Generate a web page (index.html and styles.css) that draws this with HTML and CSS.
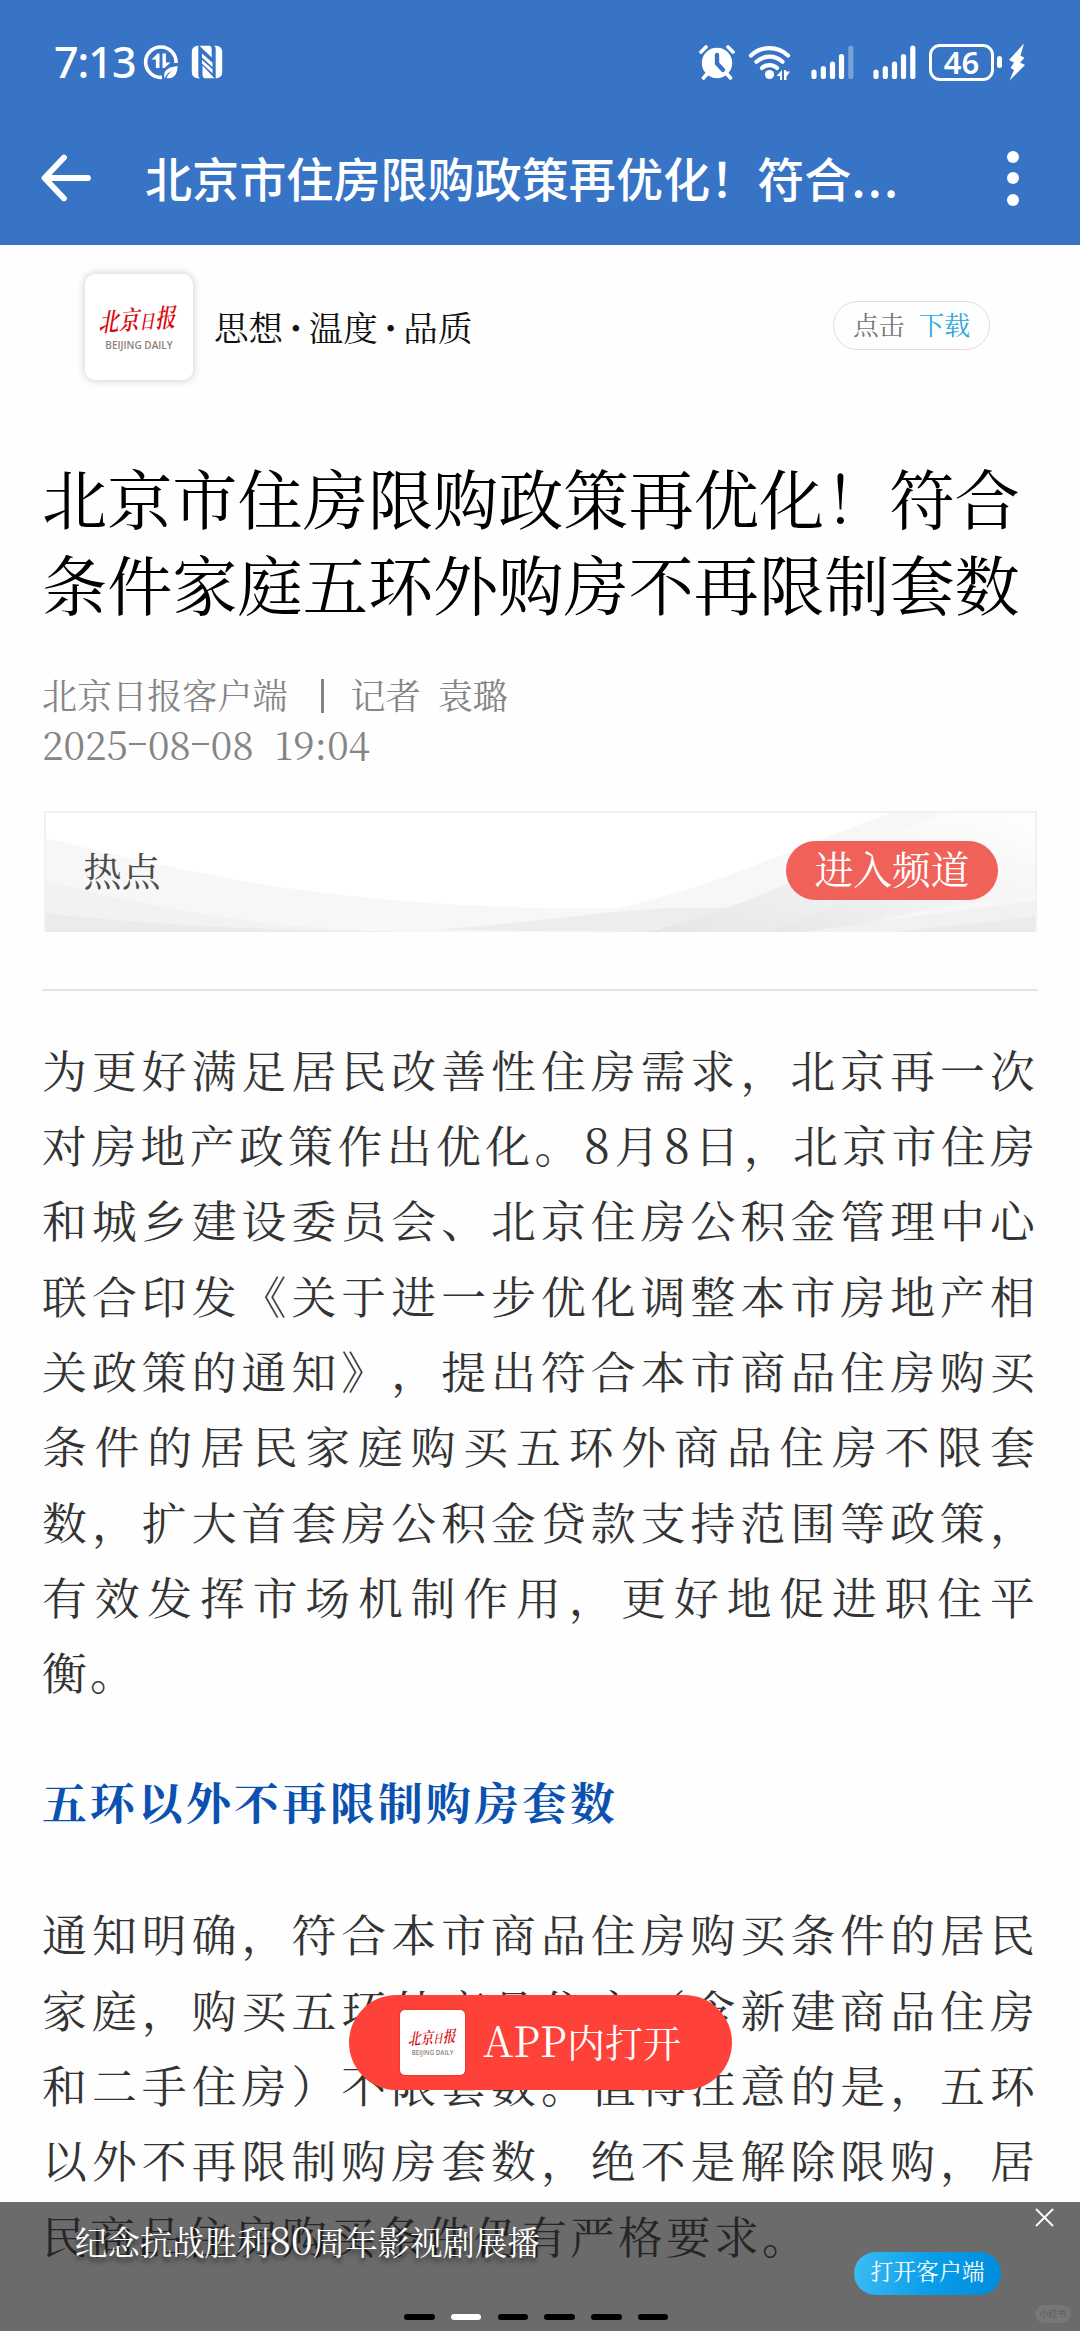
FILE: index.html
```html
<!DOCTYPE html>
<html lang="zh-CN">
<head>
<meta charset="utf-8">
<title>北京市住房限购政策再优化！</title>
<link rel="stylesheet" href="styles.css">
</head>
<body>
<div class="screen">
  <header class="top">
    <div class="status">
      <span class="time">7:13</span>
      <svg class="ic-data" width="36" height="36" viewBox="0 0 36 36">
        <path d="M19 33.3A15.2 15.2 0 1 1 33 19" fill="none" stroke="#fff" stroke-width="3.6"/>
        <path d="M8.5 15.5 14.5 9.5h2V24h-3.6V15.500zM19.500 9.500h3.400v9h4.600L21.500 24h-2z" fill="#fff"/>
        <path d="M21.500 34.500c-1.500-7 1.500-11 13-12.500 0 8.500-4 13.500-11 12 1.500-3.500 3.500-6 6.500-7.500-4 1.200-6.500 3.800-8.500 8z" fill="#fff"/>
      </svg>
      <svg class="ic-nfc" width="32" height="34" viewBox="0 0 32 34">
        <path d="M6.500.7h.8V31.500l1.600 1.700H6.500A5.700 5.700 0 0 1 .8 27.500v-21A5.800 5.800 0 0 1 6.500.7z" fill="#fff"/>
        <path d="M25.500 33.300h-.8V2.500L23.100.7h2.400a5.700 5.700 0 0 1 5.700 5.800v21a5.700 5.700 0 0 1-5.700 5.800z" fill="#fff"/>
        <path d="M8.500.7h10.500c1.300 1 1.700 2.200 1.700 4V12.500zM23.500 33.300H13.500c-1.500-1-2-2.200-2-4V20.500z" fill="#fff"/>
        <path d="M11 8.500 21.500 17.800V22L11 12.500zM11 15 21.500 24.300v4L11 18.500z" fill="#fff"/>
      </svg>
      <span class="push"></span>
      <svg class="ic-alarm" width="36" height="36" viewBox="0 0 36 36">
        <path d="M2 8 7 3M34 8 29 3M8 30l-3.500 4M28 30l3.500 4" stroke="#fff" stroke-width="3.600" stroke-linecap="round"/>
        <circle cx="18" cy="19" r="15.200" fill="#fff"/>
        <path d="M18 11V19.500l6 6.500" fill="none" stroke="#3874c6" stroke-width="4.400" stroke-linecap="round"/>
      </svg>
      <svg class="ic-wifi" width="44" height="36" viewBox="0 0 44 36">
        <g fill="none" stroke="#fff" stroke-width="4.200" stroke-linecap="round"><path d="M3 11.500a27 27 0 0 1 37 0M8.500 17.800a19 19 0 0 1 26 0M14 24a11 11 0 0 1 15 0"/></g>
        <circle cx="21.500" cy="30.500" r="4.600" fill="#fff"/>
        <path d="M34 26v10h-2v-4h-3.500zM36 36V26h2v1.500h4L38.500 32.500V36z" fill="#fff"/>
      </svg>
      <svg class="ic-sig" width="44" height="36" viewBox="0 0 44 36" stroke="#fff" stroke-width="5.200" stroke-linecap="round">
        <path d="M3 28v4.500M12.300 24.500v8M21.500 20v12.500M30.500 12.500v20"/><path d="M39.800 4v28.500" opacity=".32"/>
      </svg>
      <svg class="ic-sig2" width="44" height="36" viewBox="0 0 44 36" stroke="#fff" stroke-width="5.200" stroke-linecap="round">
        <path d="M3 28v4.500M12.300 24.500v8M21.500 20v12.500M30.500 12.500v20M39.800 4v28.500"/>
      </svg>
      <span class="battery">46</span><span class="cap"></span>
      <svg class="ic-bolt" width="18" height="38" viewBox="0 0 18 38"><path d="M16 .5 1 17l5 2.500L2.500 25l3.500 2-4.500 10.500L17 22l-5-2.500L16.500 15l-4-2.500z" fill="#fff"/></svg>
    </div>
    <div class="nav">
      <svg width="51" height="48" viewBox="0 0 51 48" fill="none" stroke="#fff" stroke-width="5.800" stroke-linecap="round" stroke-linejoin="round"><path d="M23 3.500 3.500 24 23 44.500M4 24h43"/></svg>
      <span class="nav-title">北京市住房限购政策再优化！符合<span class="dots">...</span></span>
      <span class="menu"><i></i><i></i><i></i></span>
    </div>
  </header>

  <div class="brand">
    <div class="logo"><b class="logo-cn">北京<small>日</small>报</b><span class="logo-en">BEIJING DAILY</span></div>
    <span class="slogan">思想<i>·</i>温度<i>·</i>品质</span>
    <a class="download">点击<em>下载</em></a>
  </div>

  <article class="article">
    <h1>北京市住房限购政策再优化！符合<br>条件家庭五环外购房不再限制套数</h1>
    <div class="meta"><span>北京日报客户端</span><i></i><span class="reporter">记者</span><span>袁璐</span></div>
    <div class="date">2025<s></s>08<s></s>08<span>19:04</span></div>
    <div class="channel">
      <svg class="waves" width="992" height="122" viewBox="0 0 992 122" preserveAspectRatio="none">
        <defs><linearGradient id="fade" x1="0" x2="1" y1="1" y2="0"><stop offset="0" stop-color="#e6e6e6"/><stop offset=".55" stop-color="#f4f4f4"/><stop offset="1" stop-color="#fff"/></linearGradient></defs>
        <path d="M430 122C640 100 730 40 850 0H992V122z" fill="#f7f7f7"/>
        <path d="M0 26C160 66 300 98 560 98 740 98 860 92 992 76V122H0z" fill="#f7f7f7"/>
        <path d="M0 70C120 100 230 120 360 122H0z" fill="#f2f2f2"/>
        <path d="M0 103C90 112 180 120 360 122H0z" fill="#ebebeb"/>
        <path d="M390 120C490 112 570 100 620 98L720 96C650 108 620 116 600 122z" fill="#ededed"/>
        <path d="M600 122C720 95 800 40 900 0H992V40C900 60 850 122 760 122z" fill="url(#fade)"/>
        <path d="M720 122C820 95 860 30 950 0H992V82C920 92 840 105 800 122z" fill="url(#fade)" opacity=".8"/>
        <path d="M760 122C850 108 930 98 992 90V122z" fill="#f1f1f1"/>
        <path d="M850 122C900 116 950 112 992 106V122z" fill="#ebebeb"/>
      </svg>
      <span class="channel-name">热点</span>
      <a class="channel-go">进入频道</a>
    </div>
    <div class="rule"></div>
    <div class="text">
      <p class="full">为更好满足居民改善性住房需求，北京再一次</p>
      <p class="full">对房地产政策作出优化。<b>8</b>月<b>8</b>日，北京市住房</p>
      <p class="full">和城乡建设委员会、北京住房公积金管理中心</p>
      <p class="full">联合印发《关于进一步优化调整本市房地产相</p>
      <p class="full">关政策的通知》，提出符合本市商品住房购买</p>
      <p class="full">条件的居民家庭购买五环外商品住房不限套</p>
      <p class="full">数，扩大首套房公积金贷款支持范围等政策，</p>
      <p class="full">有效发挥市场机制作用，更好地促进职住平</p>
      <p>衡。</p>
    </div>
    <h2>五环以外不再限制购房套数</h2>
    <div class="text">
      <p class="full">通知明确，符合本市商品住房购买条件的居民</p>
      <p class="full">家庭，购买五环外商品住房（含新建商品住房</p>
      <p class="full">和二手住房）不限套数。值得注意的是，五环</p>
      <p class="full">以外不再限制购房套数，绝不是解除限购，居</p>
      <p>民商品住房购买条件仍有严格要求。</p>
    </div>
  </article>

  <a class="open-app">
    <div class="logo logo-sm"><b class="logo-cn">北京<small>日</small>报</b><span class="logo-en">BEIJING DAILY</span></div>
    <span class="open-label"><b>APP</b>内打开</span>
  </a>

  <footer class="promo">
    <span class="promo-title">纪念抗战胜利<b>80</b>周年影视剧展播</span>
    <div class="promo-side">
      <svg width="19" height="19" viewBox="0 0 19 19" stroke="#fff" stroke-width="1.800"><path d="M1 1l17 17M18 1 1 18"/></svg>
      <a class="promo-btn">打开客户端</a>
    </div>
    <div class="pager"><i></i><i class="on"></i><i></i><i></i><i></i><i></i></div>
    <span class="mark">小红书</span>
  </footer>
</div>
</body>
</html>
```
FILE: styles.css
```css
* { box-sizing: border-box; margin: 0; padding: 0; }
i, em { font-style: normal; }
body { background: #fefefe; }

.screen {
  position: relative;
  width: 1080px;
  height: 2331px;
  overflow: hidden;
  background: #fefefe;
  font-family: "Noto Serif CJK SC", "Noto Serif SC", "Noto Sans CJK SC", serif;
  font-weight: 400;
  text-spacing-trim: space-all;
  white-space: nowrap;
}

/* Status bar and navigation */
.top { height: 245px; background: #3874c6; color: #fff; font-family: "Noto Sans CJK SC", sans-serif; }
.status { display: flex; align-items: center; height: 124px; padding: 0 54px 0 54px; }
.time { width: 89px; font: 500 43px/60px "Noto Sans", sans-serif; letter-spacing: -1px; }
.ic-nfc { margin-left: 12px; }
.push { flex: 1; }
.ic-wifi { margin-left: 13px; }
.ic-sig { margin-left: 19px; }
.ic-sig2 { margin-left: 18px; }
.battery {
  width: 65px; height: 37px; margin-left: 12px;
  border: 3px solid #fff; border-radius: 11px;
  font: 600 31px/31px "Noto Sans", sans-serif; text-align: center;
}
.cap { width: 5px; height: 12px; margin-left: 3px; border-radius: 3px; background: #fff; }
.ic-bolt { margin-left: 6px; }
.nav { display: flex; align-items: center; height: 108px; padding: 0 61px 0 41px; }
.nav-title { margin: -2px 0 0 53px; font-size: 47.1px; line-height: 60px; font-weight: 500; }
.dots { letter-spacing: 2.2px; }
.menu { display: flex; flex-direction: column; gap: 9.500px; margin-left: auto; }
.menu i { width: 12px; height: 12px; border-radius: 50%; background: #fff; }

/* Brand strip */
.brand { display: flex; align-items: center; height: 164px; padding: 0 90px 0 85px; }
.logo {
  display: flex; flex-direction: column; align-items: center; justify-content: center;
  width: 108px; height: 106px; border-radius: 10px; background: #fff;
  box-shadow: 0 0 8px rgba(0,0,0,.22);
}
.logo-cn { color: #d8090d; font: 600 20px/34px "Noto Serif CJK SC", "Noto Sans CJK SC", serif; transform: skew(-10deg, -4deg) scaleY(1.3); letter-spacing: .6px; }
.logo-cn small { font-size: 15px; }
.logo-en { color: #8f7f78; font: 600 10px/14px "Open Sans", sans-serif; }
.slogan { display: flex; margin: -2px 0 0 21px; color: #111; font-size: 34.6px; line-height: 50px; }
.slogan i { width: 25.500px; text-align: center; font-weight: 900; display: flex; justify-content: center; }
.download {
  display: flex; justify-content: center; gap: 14px; margin: -3px 0 0 auto;
  width: 157px; height: 49px; border: 1.500px solid #ddd; border-radius: 25px;
  color: #777; font-size: 25.800px; line-height: 43px;
}
.download em { color: #2ba6df; }

/* Article */
.article { padding: 44px 42px 0; }
h1 { color: #000; font-size: 65.2px; line-height: 86.4px; font-weight: 400; }
.meta { display: flex; align-items: center; margin-top: 43px; height: 50px; color: #858585; font-size: 35.1px; }
.meta i { width: 3px; height: 34px; margin: 4px 27px 0 33px; background: #858585; }
.reporter { margin-right: 17px; }
.date { display: flex; align-items: center; height: 50px; color: #858585; font-size: 38.5px; line-height: 50px; }
.date s { width: 17px; height: 2px; margin: 0 1.500px; background: #858585; }
.date span { margin-left: 21px; }
.channel {
  position: relative; display: flex; align-items: center; justify-content: space-between;
  width: 993px; height: 121px; margin: 42px 0 0 2px; padding: 0 37px 3px 37px;
  border: 2px solid #f1f1f1; border-bottom: 0; background: #fff;
}
.waves { position: absolute; inset: 0; width: 100%; height: 100%; }
.channel-name, .channel-go { position: relative; font-size: 38.800px; }
.channel-name { color: #4c4c4c; line-height: 56px; margin-top: -4px; }
.channel-go { width: 212px; height: 59px; border-radius: 30px; background: #ef6159; color: #fff; line-height: 53px; text-align: center; }
.rule { height: 2px; margin-top: 57px; background: #e2e2e2; }
.text { color: #333; font-size: 44.800px; line-height: 75.300px; letter-spacing: 3.200px; }
.text b { font-size: 47px; line-height: 1; font-weight: 400; }
.rule + .text { margin-top: 40px; }
.full { text-align: justify; text-align-last: justify; }
h2 { margin: 55px 0 56px; color: #0b52b0; font-size: 44.800px; line-height: 76px; font-weight: 700; letter-spacing: 3.200px; }

/* Floating button */
.open-app {
  position: absolute; left: 349px; top: 1995px; display: flex; align-items: center; gap: 18px;
  width: 383px; height: 95px; padding-left: 51px; border-radius: 48px;
  background: #fe4139; color: #fff; font-size: 38px;
}
.open-label { display: flex; align-items: baseline; line-height: 60px; margin-top: -5px; }
.open-label b { font-size: 42px; font-weight: 400; letter-spacing: .3px; }
.logo-sm { width: 65px; height: 65px; border-radius: 5px; box-shadow: 0 0 3px rgba(0,0,0,.2); }
.logo-sm .logo-cn { font-size: 12.500px; line-height: 20px; letter-spacing: .2px; }
.logo-sm .logo-cn small { font-size: 9.500px; }
.open-app .logo-sm .logo-en { font: 600 6.200px/10px "Open Sans", sans-serif; }

/* Bottom promotion */
.promo { position: absolute; left: 0; right: 0; bottom: 0; display: flex; justify-content: space-between; height: 129px; padding: 6px 26px 0 75px; background: rgba(31,31,31,.657); color: #fff; }
.promo-title { margin-top: 10px; font-size: 32.400px; line-height: 46px; text-shadow: 0 4px 5px rgba(0,0,0,.6); }
.promo-title b { font-size: 39px; line-height: 1; font-weight: 400; }
.promo-side { display: flex; flex-direction: column; align-items: flex-end; gap: 25px; }
.promo-btn { width: 147px; height: 43px; margin-right: 53px; border-radius: 22px; background: linear-gradient(100deg, #3dbcf3, #0a9fe9 50%, #008bdd); font-size: 22.800px; line-height: 38px; text-align: center; }
.pager { position: absolute; left: 404px; bottom: 11px; display: flex; gap: 16.300px; }
.pager i { width: 30.500px; height: 6px; border-radius: 3px; background: #000; }
.pager .on { background: #fff; }
.mark { position: absolute; right: 9px; bottom: 8px; width: 36px; height: 18px; border-radius: 9px; background: #777; color: #606060; font: 9px/17px "Noto Sans CJK SC", sans-serif; text-align: center; }
```
